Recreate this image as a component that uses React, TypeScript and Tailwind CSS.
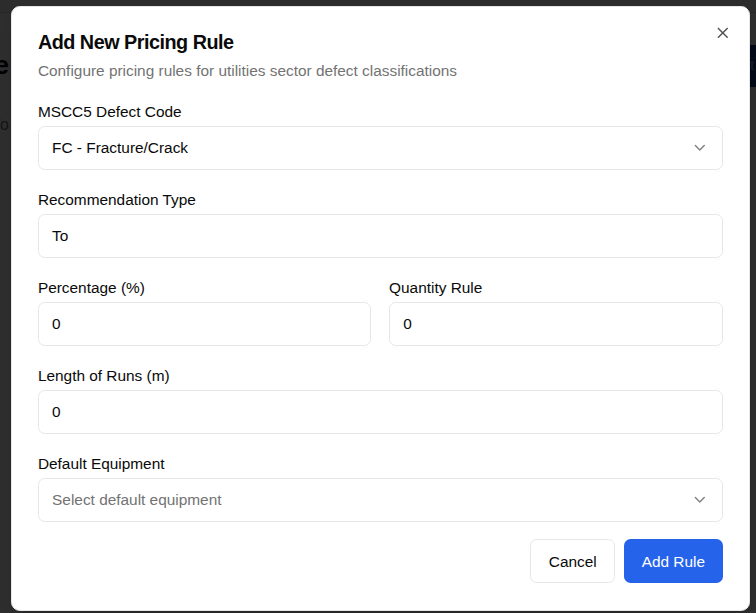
import { ChevronDown, X } from "lucide-react";

function Field({ label, children }: { label: string; children: React.ReactNode }) {
  return (
    <div className="flex flex-col gap-[6.2px]">
      <label className="text-[15.4px] leading-none text-[#0a0a0a]">{label}</label>
      {children}
    </div>
  );
}

function TextBox({ value }: { value: string }) {
  return (
    <div className="h-[44px] rounded-[6.6px] border border-[#e5e7eb] px-[13.2px] flex items-center text-[15.4px] text-[#0a0a0a]">
      {value}
    </div>
  );
}

function SelectBox({ value, placeholder }: { value?: string; placeholder?: string }) {
  return (
    <div className="h-[44px] rounded-[6.6px] border border-[#e5e7eb] px-[13.2px] flex items-center justify-between text-[15.4px]">
      {value ? (
        <span className="text-[#0a0a0a]">{value}</span>
      ) : (
        <span className="text-[#737373]">{placeholder}</span>
      )}
      <ChevronDown className="w-[17.6px] h-[17.6px] text-[#0a0a0a] opacity-50" />
    </div>
  );
}

export default function App() {
  return (
    <div className="relative w-[756px] h-[613px] overflow-hidden bg-white font-['Liberation_Sans',Arial,sans-serif]">
      {/* page behind the dialog */}
      <div className="flex flex-col">
        <div className="h-[13px] bg-[#f3f4f6] border-b border-[#d1d5db]" />
        <div className="flex items-center justify-between h-[75px] pt-[30px]">
          <div className="w-[9px] overflow-hidden flex justify-end">
            <h1 className="whitespace-nowrap text-[26px] font-bold text-black">Pricing Rule</h1>
          </div>
          <div className="w-[8px] h-[42px] bg-[#1e3a8a] overflow-hidden flex items-center">
            <span className="text-[15px] text-[#93a3c9] pl-[2px]">t</span>
          </div>
        </div>
        <div className="w-[9px] overflow-hidden flex justify-end pt-[25px]">
          <span className="whitespace-nowrap text-[16px] text-[#6b7280]">Info</span>
        </div>
      </div>

      {/* overlay */}
      <div className="absolute inset-0 bg-black/[0.82]" />

      {/* dialog */}
      <div className="absolute left-[10.5px] top-[6px] w-[739.5px] rounded-[8.8px] border border-[#e5e7eb] bg-white px-[26.4px] pt-[26.4px] pb-[26.4px] flex flex-col shadow-lg">
        <button className="absolute right-[17px] top-[17px] text-[#0a0a0a] opacity-70">
          <X className="w-[17.6px] h-[17.6px]" strokeWidth={2} />
        </button>

        <div className="flex flex-col gap-[6.6px]">
          <h2 className="text-[19.8px] font-bold leading-none tracking-tight text-[#0a0a0a]">
            Add New Pricing Rule
          </h2>
          <p className="text-[15.4px] leading-[22px] text-[#737373]">
            Configure pricing rules for utilities sector defect classifications
          </p>
        </div>

        <div className="mt-[22.5px] flex flex-col gap-[22.4px]">
          <Field label="MSCC5 Defect Code">
            <SelectBox value="FC - Fracture/Crack" />
          </Field>
          <Field label="Recommendation Type">
            <TextBox value="To" />
          </Field>
          <div className="grid grid-cols-2 gap-x-[17.6px]">
            <Field label="Percentage (%)">
              <TextBox value="0" />
            </Field>
            <Field label="Quantity Rule">
              <TextBox value="0" />
            </Field>
          </div>
          <Field label="Length of Runs (m)">
            <TextBox value="0" />
          </Field>
          <Field label="Default Equipment">
            <SelectBox placeholder="Select default equipment" />
          </Field>
        </div>

        <div className="mt-[17.6px] flex justify-end gap-[8.8px]">
          <button className="h-[44px] px-[17.6px] rounded-[6.6px] border border-[#e5e7eb] bg-white text-[15.4px] text-[#0a0a0a]">
            Cancel
          </button>
          <button className="h-[44px] px-[17.6px] rounded-[6.6px] bg-[#2563eb] text-[15.4px] text-white">
            Add Rule
          </button>
        </div>
      </div>
    </div>
  );
}
